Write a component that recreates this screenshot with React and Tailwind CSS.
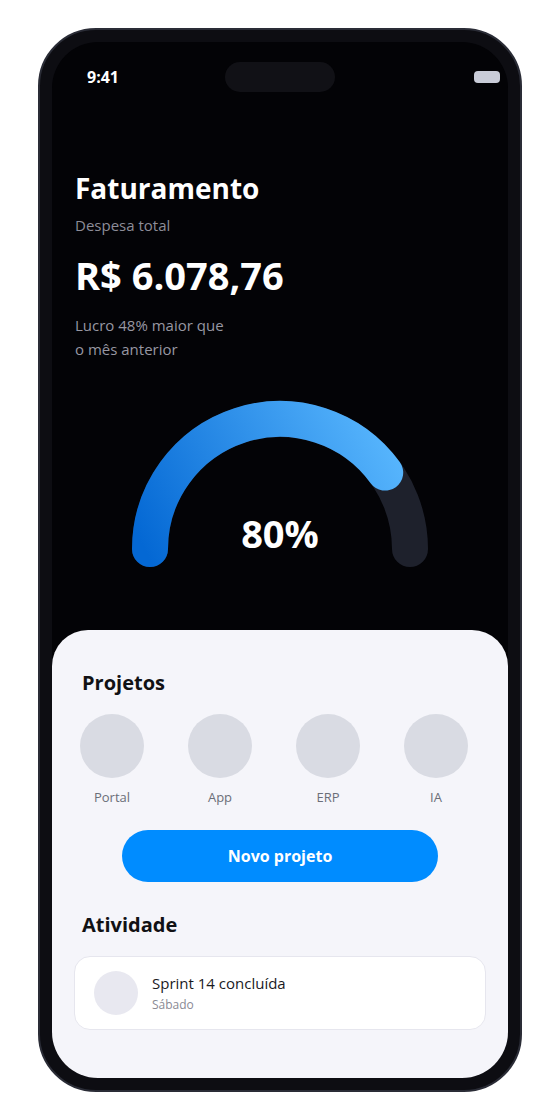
export default function App() {
  const projects = ['Portal', 'App', 'ERP', 'IA']

  return (
    <div className="min-h-screen bg-white pt-[28px] pl-[38px]" style={{ fontFamily: '"Open Sans", "Noto Sans", sans-serif' }}>
      <div className="w-[484px] h-[1064px] rounded-[58px] border-2 border-[#2a2c36] bg-[#0d0d12] p-[12px]">
        <div className="w-[456px] h-[1036px] rounded-[46px] bg-[#030306] overflow-hidden flex flex-col">
          {/* status bar */}
          <div className="relative flex items-center justify-between h-[30px] mt-[20px] pl-[35px] pr-[8px]">
            <span className="text-white text-[16px] font-bold">9:41</span>
            <div className="absolute left-[173px] top-0 w-[110px] h-[30px] rounded-full bg-[#111116]"></div>
            <div className="w-[26px] h-[12px] rounded-[4px] bg-[#c9ccd8]"></div>
          </div>

          {/* header */}
          <div className="px-[23px] mt-[79px]">
            <h1 className="text-white text-[28px] leading-[34px] font-bold">Faturamento</h1>
            <p className="mt-[10px] text-[15px] leading-[20px] text-[#8d8d98]">Despesa total</p>
            <p className="mt-[17px] text-white text-[38px] leading-[46px] font-bold">R$ 6.078,76</p>
            <p className="mt-[15px] text-[15px] leading-[24px] text-[#9797a2]">
              Lucro 48% maior que
              <br />
              o mês anterior
            </p>
          </div>

          {/* gauge */}
          <div className="relative mt-[39px] mx-auto w-[300px] h-[170px]">
            <svg width="300" height="170" viewBox="0 0 300 170">
              <defs>
                <linearGradient id="g" gradientUnits="userSpaceOnUse" x1="20" y1="160" x2="270" y2="30">
                  <stop offset="0" stopColor="#0468d4" />
                  <stop offset="1" stopColor="#5bb9ff" />
                </linearGradient>
              </defs>
              <path d="M 20 149 A 130 130 0 0 1 280 149" fill="none" stroke="#1e212c" strokeWidth="36" strokeLinecap="round" />
              <path d="M 20 149 A 130 130 0 0 1 255.2 72.6" fill="none" stroke="url(#g)" strokeWidth="36" strokeLinecap="round" />
            </svg>
            <span className="absolute left-0 right-0 top-[110px] text-center text-white text-[38px] leading-[46px] font-bold">80%</span>
          </div>

          {/* sheet */}
          <div className="mt-[60px] flex-1 rounded-t-[36px] bg-[#f5f5fa] pt-[39px]">
            <h2 className="px-[30px] text-[20px] leading-[28px] font-bold text-[#111114]">Projetos</h2>
            <div className="mt-[17px] flex gap-[44px] pl-[28px]">
              {projects.map((p) => (
                <div key={p} className="flex flex-col items-center w-[64px]">
                  <div className="w-[64px] h-[64px] rounded-full bg-[#d9dbe3]"></div>
                  <span className="mt-[10px] text-[13px] leading-[18px] text-[#6b6e78]">{p}</span>
                </div>
              ))}
            </div>
            <button className="mt-[24px] mx-auto block w-[316px] h-[52px] rounded-full bg-[#008cff] text-white text-[16px] font-bold">
              Novo projeto
            </button>
            <h2 className="mt-[29px] px-[30px] text-[20px] leading-[28px] font-bold text-[#111114]">Atividade</h2>
            <div className="mt-[17px] mx-[22px] h-[74px] rounded-[16px] border border-[#e6e6ee] bg-white flex items-center pl-[19px]">
              <div className="w-[44px] h-[44px] rounded-full bg-[#e8e8f0]"></div>
              <div className="ml-[14px]">
                <p className="text-[15px] leading-[20px] font-medium text-[#1a1a1e]">Sprint 14 concluída</p>
                <p className="mt-[4px] text-[12px] leading-[16px] text-[#8a8a94]">Sábado</p>
              </div>
            </div>
          </div>
        </div>
      </div>
    </div>
  )
}
